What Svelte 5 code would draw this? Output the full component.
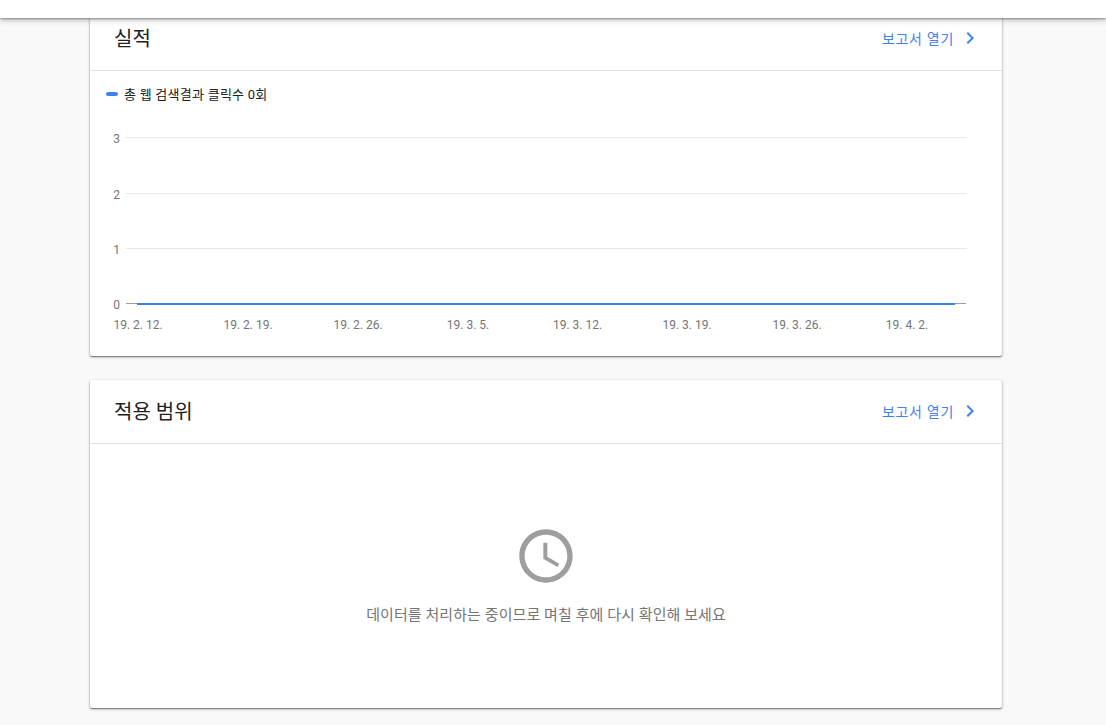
<script lang="ts">
  const gridLines = [
    { label: '3', y: 137.5 },
    { label: '2', y: 193.5 },
    { label: '1', y: 248.5 }
  ];
  const dates = [
    { label: '19. 2. 12.', x: 138 },
    { label: '19. 2. 19.', x: 248 },
    { label: '19. 2. 26.', x: 358 },
    { label: '19. 3. 5.', x: 468 },
    { label: '19. 3. 12.', x: 577.5 },
    { label: '19. 3. 19.', x: 687 },
    { label: '19. 3. 26.', x: 797 },
    { label: '19. 4. 2.', x: 907 }
  ];
  // chart svg starts 115px down the page and at the card's left edge
  const top = 115;
  const left = 90;
</script>

<header class="topbar"></header>

<main class="page">
  <section class="card">
    <div class="card-head">
      <h2>실적</h2>
      <a class="report-link" href="#performance">
        보고서 열기
        <svg aria-hidden="true" viewBox="0 0 24 24"><path d="M10 6 8.59 7.41 13.17 12l-4.58 4.59L10 18l6-6z" /></svg>
      </a>
    </div>
    <div class="legend">
      <span class="swatch"></span>
      <span>총 웹 검색결과 클릭수 0회</span>
    </div>
    <svg class="chart" viewBox="0 0 912 241" role="img" aria-label="실적 차트">
      {#each gridLines as line}
        <line class="grid" x1={126 - left} x2={967 - left} y1={line.y - top} y2={line.y - top} />
        <text class="tick" x={120 - left} y={line.y - top + 5} text-anchor="end">{line.label}</text>
      {/each}
      <line class="axis" x1={126 - left} x2={966 - left} y1={303.5 - top} y2={303.5 - top} />
      <text class="tick" x={120 - left} y={304 - top + 4.5} text-anchor="end">0</text>
      <line class="series" x1={137 - left} x2={955 - left} y1={304 - top} y2={304 - top} />
      {#each dates as date}
        <text class="date" x={date.x - left} y={329 - top} text-anchor="middle">{date.label}</text>
      {/each}
    </svg>
  </section>

  <section class="card">
    <div class="card-head">
      <h2>적용 범위</h2>
      <a class="report-link" href="#coverage">
        보고서 열기
        <svg aria-hidden="true" viewBox="0 0 24 24"><path d="M10 6 8.59 7.41 13.17 12l-4.58 4.59L10 18l6-6z" /></svg>
      </a>
    </div>
    <div class="pending">
      <svg aria-hidden="true" viewBox="0 0 24 24">
        <path d="M11.99 2C6.47 2 2 6.48 2 12s4.47 10 9.99 10C17.52 22 22 17.52 22 12S17.52 2 11.99 2zM12 20c-4.42 0-8-3.58-8-8s3.58-8 8-8 8 3.58 8 8-3.58 8-8 8z" />
        <path d="M12.5 7H11v6l5.25 3.15.75-1.23-4.5-2.67z" />
      </svg>
      <p>데이터를 처리하는 중이므로 며칠 후에 다시 확인해 보세요</p>
    </div>
  </section>
</main>

<style>
  :global(body) {
    background: #f9f9f9;
  }

  .topbar {
    position: fixed;
    top: 0;
    left: 0;
    right: 0;
    z-index: 2;
    height: 18px;
    background: #fff;
    box-shadow: 0 1px 2px rgba(60, 64, 67, 0.5), 0 2px 6px rgba(60, 64, 67, 0.3);
  }

  .page {
    display: flex;
    flex-direction: column;
    gap: 24px;
    box-sizing: border-box;
    width: 912px;
    height: 725px;
    margin-left: 90px;
    padding-top: 7px;
    font-family: Roboto, "Noto Sans CJK KR", sans-serif;
  }

  .card {
    background: #fff;
    border-radius: 2px;
    box-shadow: 0 1px 1px rgba(0, 0, 0, 0.35), 0 1px 3px rgba(0, 0, 0, 0.35);
  }

  .card-head {
    display: flex;
    align-items: center;
    justify-content: space-between;
    box-sizing: border-box;
    height: 64px;
    padding: 0 24px 1px;
    border-bottom: 1px solid #e0e0e0;
  }

  h2 {
    margin: 0 0 2px;
    color: #212121;
    font-size: 20px;
    font-weight: 400;
  }

  .report-link {
    display: flex;
    align-items: center;
    gap: 4px;
    color: #3f80f2;
    font-size: 14px;
    letter-spacing: 0.7px;
    text-decoration: none;
  }

  .report-link svg {
    width: 24px;
    height: 24px;
    margin-right: -4px;
    fill: currentColor;
  }

  .legend {
    display: flex;
    align-items: center;
    gap: 6px;
    height: 43px;
    padding: 1px 0 0 16px;
    color: #212121;
    font-size: 13px;
    letter-spacing: 0.25px;
  }

  .swatch {
    width: 12px;
    height: 4px;
    border-radius: 2px;
    background: #3f80f2;
  }

  .chart {
    display: block;
    width: 912px;
    height: 241px;
  }

  .grid {
    stroke: #e8e8e8;
    stroke-width: 1;
  }

  .axis {
    stroke: #9e9e9e;
    stroke-width: 1;
  }

  .series {
    stroke: #3b7ded;
    stroke-width: 2;
  }

  .tick,
  .date {
    fill: #757575;
    font-size: 12px;
  }

  .pending {
    display: flex;
    flex-direction: column;
    align-items: center;
    height: 264px;
    box-sizing: border-box;
    padding-top: 80px;
  }

  .pending svg {
    width: 64px;
    height: 64px;
    fill: #9e9e9e;
  }

  .pending p {
    margin: 17px 0 0;
    color: #757575;
    font-size: 15px;
    line-height: 20px;
    letter-spacing: 0.08px;
  }
</style>
